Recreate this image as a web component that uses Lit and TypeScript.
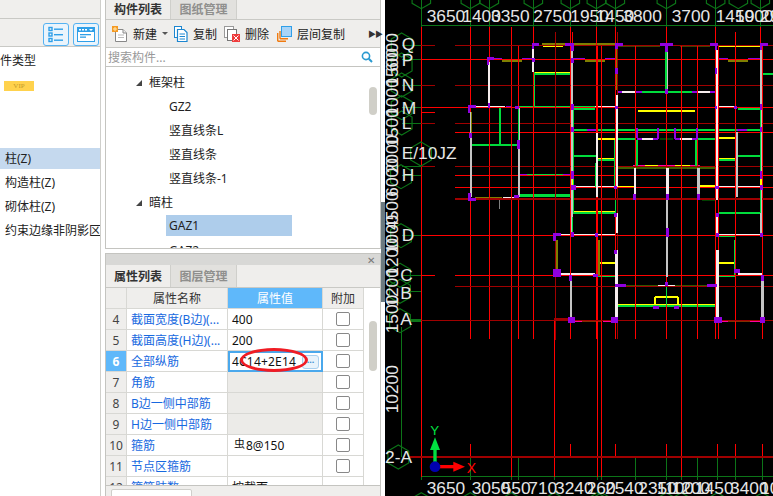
import { LitElement, html, css, svg } from "lit";
import { customElement } from "lit/decorators.js";

type Seg = [number, number, number, number, string, number?];
const W = "#f6ecec", G = "#c4c4c4", N = "#00dc3c", Y = "#ffff00", P = "#9000e0", M = "#ff00a0",
  O = "#7f7f00", D = "#006a00", R = "#ff0000", K = "#a00000", DG = "#0c7418";

const walls: Seg[] = [
  [470, 132, 690, 132, O, 6], [475, 139, 535, 139, Y, 3], [700, 139, 825, 139, "#404000", 3], [885, 139, 975, 139, "#404000", 3], [1000, 139, 1125, 139, Y, 3],
  [312, 185, 312, 318, W, 6], [325, 176, 350, 176, P, 6], [350, 183, 410, 183, O, 5], [410, 176, 445, 176, P, 6],
  [445, 145, 445, 215, W, 6], [447, 215, 447, 320, N, 3], [450, 222, 558, 222, N, 8], [450, 217, 558, 217, Y, 3],
  [260, 319, 360, 319, W, 3], [400, 319, 690, 319, N, 3], [362, 319, 380, 319, P, 5],
  [257, 335, 257, 590, G, 6], [260, 335, 260, 400, O, 3], [344, 325, 344, 432, N, 6], [260, 434, 400, 434, N, 6],
  [401, 325, 401, 590, G, 6], [401, 325, 401, 420, N, 3], [400, 524, 425, 524, P, 6], [425, 524, 535, 524, N, 6], [535, 524, 560, 524, P, 6],
  [403, 586, 555, 586, N, 9], [270, 592, 350, 592, O, 3], [355, 592, 400, 592, W, 3], [342, 600, 342, 628, "#808080", 3],
  [562, 140, 562, 700, G, 6], [565, 330, 565, 640, N, 3], [565, 176, 600, 176, P, 6], [600, 183, 660, 183, O, 5], [660, 176, 695, 176, P, 6],
  [695, 145, 695, 270, O, 4], [695, 285, 695, 560, W, 6], [700, 276, 710, 276, P, 8], [710, 276, 750, 276, W, 8], [750, 276, 770, 276, P, 8], [770, 276, 920, 276, N, 8], [920, 276, 940, 276, P, 8], [940, 276, 975, 276, W, 8], [975, 276, 990, 276, P, 8],
  [844, 150, 844, 270, N, 7], [848, 150, 848, 270, G, 3], [995, 150, 995, 600, W, 6], [1000, 176, 1030, 176, P, 6], [1030, 183, 1090, 183, O, 5], [1090, 176, 1125, 176, P, 6],
  [1128, 140, 1128, 700, G, 6], [1125, 330, 1125, 640, N, 3], [1135, 222, 1164, 222, N, 7],
  [1000, 319, 1050, 319, W, 3], [1060, 326, 1125, 326, N, 5], [565, 326, 630, 326, N, 5], [630, 319, 690, 319, W, 3],
  [760, 332, 930, 332, Y, 6], [565, 390, 1125, 390, N, 7], [605, 390, 635, 390, P, 6], [1055, 390, 1085, 390, P, 6],
  [755, 385, 755, 415, P, 6], [755, 417, 770, 417, P, 6], [770, 417, 805, 417, W, 6], [805, 417, 820, 417, P, 6], [820, 385, 820, 417, P, 6],
  [870, 385, 870, 417, P, 6], [870, 417, 885, 417, P, 6], [885, 417, 920, 417, W, 6], [920, 417, 935, 417, P, 6], [935, 385, 935, 417, P, 6],
  [640, 416, 690, 416, Y, 6], [1000, 414, 1050, 414, Y, 6], [700, 416, 750, 416, N, 5], [940, 416, 990, 416, N, 5], [825, 416, 865, 416, "#004000", 6],
  [636, 400, 636, 590, W, 6], [632, 490, 632, 560, N, 3], [755, 420, 755, 497, N, 6], [934, 420, 934, 497, N, 6], [1056, 395, 1056, 590, G, 4],
  [565, 468, 632, 468, N, 6], [1058, 468, 1125, 468, N, 6], [640, 480, 690, 480, N, 8], [640, 475, 690, 475, Y, 3], [1000, 480, 1050, 480, N, 8], [1000, 475, 1050, 475, Y, 3],
  [689, 420, 689, 560, N, 4], [695, 504, 990, 504, "#406000", 5], [695, 498, 990, 498, O, 3], [780, 495, 820, 495, Y, 3], [870, 495, 915, 495, Y, 3], [820, 498, 870, 498, M, 6], [745, 498, 780, 498, M, 5], [915, 498, 945, 498, M, 5],
  [750, 505, 750, 590, W, 7], [847, 505, 847, 590, W, 7], [940, 505, 940, 590, G, 7],
  [565, 561, 690, 561, W, 4], [695, 561, 750, 561, Y, 4], [940, 558, 990, 558, Y, 4], [1000, 561, 1125, 561, W, 4], [1128, 530, 1128, 560, Y, 4], [562, 530, 562, 560, Y, 4],
  [750, 599, 940, 599, "#999999", 4], [950, 600, 990, 600, "#004000", 4], [1000, 638, 1125, 638, N, 6], [565, 638, 690, 638, N, 6], [565, 633, 690, 633, Y, 3],
  [525, 704, 690, 704, W, 4], [1000, 704, 1125, 704, W, 4], [1000, 710, 1050, 710, N, 4],
  [695, 640, 695, 700, W, 6], [997, 640, 997, 700, W, 6], [692, 600, 692, 640, N, 3], [562, 650, 562, 700, N, 4], [847, 600, 847, 830, G, 6],
  [515, 720, 515, 815, O, 5], [641, 720, 641, 825, O, 5], [1048, 720, 1048, 825, N, 5],
  [520, 822, 630, 822, W, 5], [640, 829, 690, 829, N, 4], [1000, 829, 1050, 829, N, 4], [1060, 822, 1130, 822, W, 5],
  [557, 830, 557, 955, G, 7], [694, 750, 694, 960, W, 7], [997, 750, 997, 960, W, 7], [1132, 830, 1132, 955, G, 7],
  [640, 789, 690, 789, Y, 6], [1000, 789, 1050, 789, Y, 6], [695, 856, 995, 856, "#335500", 5], [820, 856, 870, 856, W, 5], [844, 860, 844, 915, N, 4],
  [810, 890, 810, 915, Y, 6], [810, 891, 880, 891, Y, 6], [878, 890, 878, 915, Y, 6], [695, 918, 990, 918, N, 8], [695, 913, 990, 913, Y, 3],
  [590, 962, 650, 962, "#803000", 6], [655, 962, 680, 962, M, 6], [1030, 962, 1095, 962, "#803000", 6], [1000, 962, 1030, 962, M, 6], [1095, 962, 1125, 962, M, 6], [570, 962, 590, 962, M, 6],
];
const hWalls = walls.filter((s) => s[1] === s[3]);
const vWalls = walls.filter((s) => s[1] !== s[3]);
// purple columns: x, y, w, h
const cols: number[][] = [
  [440, 128, 22, 10], [440, 128, 8, 20], [540, 128, 25, 10], [558, 128, 8, 25], [690, 128, 25, 10], [691, 128, 8, 20], [825, 128, 40, 10], [840, 128, 8, 28], [975, 128, 25, 10], [989, 128, 8, 22], [1125, 128, 25, 10], [1124, 128, 8, 22],
  [305, 172, 22, 8], [305, 172, 8, 22], [248, 315, 24, 8], [248, 315, 8, 24], [308, 310, 8, 14], [390, 318, 12, 8], [253, 400, 8, 14], [397, 420, 8, 26],
  [248, 580, 10, 20], [248, 594, 25, 8], [388, 586, 14, 8], [558, 175, 8, 14], [691, 205, 8, 16], [989, 205, 8, 16], [441, 175, 8, 12],
  [558, 312, 8, 18], [691, 318, 8, 10], [989, 318, 8, 10], [1047, 318, 8, 10], [1124, 312, 8, 18], [840, 268, 8, 14], [558, 380, 8, 16], [1124, 380, 8, 16], [558, 512, 8, 24], [1124, 512, 8, 24], [1124, 555, 10, 16], [558, 555, 14, 16], [686, 558, 10, 10], [990, 558, 12, 10],
  [745, 582, 8, 18], [843, 582, 8, 18], [936, 582, 8, 18], [843, 685, 8, 25], [505, 700, 22, 8], [505, 700, 8, 24], [558, 695, 8, 16], [630, 700, 8, 10], [688, 640, 8, 12], [993, 640, 8, 12], [993, 698, 10, 12], [1124, 698, 10, 14],
  [505, 808, 22, 24], [552, 825, 10, 18], [625, 822, 14, 10], [688, 750, 8, 12], [1046, 808, 18, 10], [1127, 825, 10, 18], [690, 852, 32, 8], [965, 852, 32, 8], [840, 845, 8, 12], [805, 918, 16, 9], [866, 918, 16, 9],
  [548, 950, 22, 20], [678, 950, 22, 20], [988, 950, 24, 20], [1125, 950, 16, 20],
];
const redLong: [number, number, number, string?][] = [
  [109, 80, 1430], [256, 80, 1018], [313, 80, 1018], [379, 80, 1430], [400, 135, 1018], [445, 80, 1018], [511, 95, 1020, K],
  [508, 960, 1430], [556, 80, 1018], [562, 95, 135], [634, 80, 1018], [637, 135, 1430], [650, 135, 1430], [691, 80, 1018], [698, 95, 1018, K],
  [751, 135, 1018], [844, 80, 1018], [889, 135, 1430], [937, 135, 1018], [990, 80, 1018], [1000, 135, 1018], [1051, 95, 1018], [1126, 80, 140], [1132, 135, 1018],
];
const ticks = [256, 379, 556, 637, 691, 844, 997, 1051, 1132];
const botGreen = [109, 256, 379, 400, 508, 637, 650, 751, 844, 889, 937, 997, 1051, 1132];
const topGreen = [109, 256, 313, 445, 556, 634, 691, 844, 992, 1126];
const hexTop = [109, 256, 313, 445, 556, 634, 691, 844, 992, 1060, 1126];
const hexBot = [109, 256, 379, 508, 637, 650, 844, 889, 997, 1132];
const leftH: [number, string, number, string][] = [
  [135, K, 109, "Q"], [179, R, 109, "P"], [255, K, 109, "N"], [323, R, 109, "M"], [369, K, 109, "L"], [500, K, 109, "E/10JZ"], [527, R, 210, "H"], [707, R, 109, "D"],
];
const topLabels: [string, number][] = [["3650", 125], ["1400", 232], ["3350", 318], ["2750", 445], ["1950", 556], ["1450", 632], ["3800", 715], ["3700", 860], ["1450", 992], ["1900", 1050], ["2900", 1125]];
const botLabels: [string, number][] = [["3650", 125], ["3050", 260], ["550", 350], ["710", 430], ["3240", 510], ["260", 605], ["2540", 660], ["2350", 760], ["1100", 815], ["1200", 860], ["1450", 930], ["3400", 1035], ["1000", 1125]];
const sideLabels: [string, number][] = [["6000", 215], ["1500", 260], ["1000", 350], ["1500", 440], ["2000", 520], ["6000", 590], ["4500", 690], ["1000", 760], ["1200", 830], ["1200", 920], ["1500", 1000], ["10200", 1240]];
const hex = (cx: number, cy: number, r = 30) => {
  const pts = [0, 1, 2, 3, 4, 5].map((i) => {
    const a = (Math.PI / 3) * i - Math.PI / 2;
    return `${cx + r * Math.cos(a)},${cy + r * Math.sin(a)}`;
  }).join(" ");
  return svg`<polygon points=${pts} fill="none" stroke=${DG} stroke-width="3.5"></polygon>`;
};
const ln = (a: number, b: number, c: number, d: number, col: string, w = 3) =>
  svg`<line x1=${a} y1=${b} x2=${c} y2=${d} stroke=${col} stroke-width=${w}></line>`;

@customElement("cad-canvas")
class CadCanvas extends LitElement {
  static styles = css`
    :host { display: block; width: 388px; height: 496px; background: #000; }
    svg { display: block; }
    .geo { shape-rendering: crispEdges; }
    text { font-family: "Liberation Sans", sans-serif; font-size: 52px; fill: #e6e6e6; }
    .x { fill: #ff0000; font-size: 42px; }
    .y { fill: #00e040; font-size: 40px; }
  `;
  render() {
    return html`<svg width="388" height="496" viewBox="0 0 1164 1488">
      <g class="geo">
        ${ln(109, 75, 1164, 75, DG)} ${ln(48, 980, 48, 1371, DG)}
        ${topGreen.map((x) => ln(x, 0, x, 130, DG))}
        ${botGreen.map((x) => ln(x, 1371, x, 1440, DG))}
        ${ln(109, 1430, 1164, 1430, DG)}
        ${leftH.map(([y]) => ln(50, y, 109, y, DG))}
        ${ln(50, 826, 109, 826, DG)} ${ln(50, 874, 109, 874, DG)} ${ln(75, 962, 109, 962, DG, 8)}
        ${hWalls.map(([a, b, c, d, col, w]) => ln(a, b, c, d, col, w ?? 4))}
        ${redLong.map(([x, a, b, c]) => ln(x, a, x, b, c ?? R))}
        ${ticks.map((x) => ln(x, 1332, x, 1371, R))}
        ${leftH.map(([y, c, s]) => svg`${s === 109 ? ln(109, y, c === K ? 150 : 1164, y, c) : ""}${ln(210, y, 1164, y, c)}`)}
        ${ln(210, 397, 1164, 397, R)} ${ln(210, 563, 1164, 563, R)} ${ln(210, 597, 1164, 597, K, 4)}
        ${ln(109, 337, 150, 337, R)} ${ln(109, 826, 150, 826, R)} ${ln(210, 826, 1164, 826, R)} ${ln(210, 859, 1164, 859, K)}
        ${ln(109, 962, 1164, 962, K, 4)} ${ln(508, 957, 550, 957, K, 4)} ${ln(75, 1371, 1164, 1371, K, 5)}
        ${vWalls.map(([a, b, c, d, col, w]) => ln(a, b, c, d, col, w ?? 4))}
        ${cols.map(([x, y, w, h]) => svg`<rect x=${x} y=${y} width=${w} height=${h} fill=${P}></rect>`)}
      </g>
      ${hexTop.map((x) => hex(x, -6, 32))}
      ${hexBot.map((x) => hex(x, 1512, 34))}
      ${[[50, 135], [50, 195], [50, 255], [50, 323], [50, 369], [108, 462], [48, 530], [48, 707], [45, 826], [45, 874], [45, 962], [40, 1371]].map(([x, y]) => hex(x, y, 36))}
      ${sideLabels.map(([t, y]) => svg`<text transform="translate(38 ${y}) rotate(-90)">${t}</text>`)}
      ${leftH.map(([, , , s], i) => svg`<text x="50" y=${[150, 197, 272, 341, 387, 477, 542, 723][i]}>${s}</text>`)}
      <text x="46" y="842">C</text><text x="46" y="896">B</text><text x="46" y="976">A</text><text x="0" y="1390">2-A</text>
      ${topLabels.map(([t, x]) => svg`<text x=${x} y="65">${t}</text>`)}
      ${botLabels.map(([t, x]) => svg`<text x=${x} y="1481">${t}</text>`)}
      <rect x="145" y="1340" width="10" height="60" fill="#00e040"></rect>
      <polygon points="150,1312 135,1350 165,1350" fill="#00e040"></polygon>
      <rect x="150" y="1395" width="60" height="10" fill="#ff0000"></rect>
      <polygon points="240,1400 205,1385 205,1415" fill="#ff0000"></polygon>
      <circle cx="150" cy="1400" r="16" fill="#0000b0"></circle>
      <text class="y" x="136" y="1305">Y</text><text class="x" x="245" y="1418">X</text>
    </svg>`;
  }
}

const iconList = html`<svg width="24" height="21" viewBox="0 0 24 21"><g fill="none" stroke="#2f9fe8" stroke-width="1.4"><rect x="5" y="3.5" width="3" height="3"/><rect x="5" y="9" width="3" height="3"/><rect x="5" y="14.5" width="3" height="3"/></g><g fill="#2f9fe8"><rect x="10" y="4.5" width="9" height="1.4"/><rect x="10" y="10" width="9" height="1.4"/><rect x="10" y="15.5" width="9" height="1.4"/></g></svg>`;
const iconForm = html`<svg width="24" height="21" viewBox="0 0 24 21"><rect x="3" y="3" width="18" height="15" fill="#2f9fe8"/><rect x="4" y="8" width="16" height="9" fill="#fff"/><g fill="#fff"><rect x="5" y="5" width="2" height="1.5"/><rect x="8" y="5" width="2" height="1.5"/><rect x="11" y="5" width="2" height="1.5"/><polygon points="15,5 19,5 17,7"/></g><g fill="#2f9fe8"><rect x="6" y="10" width="11" height="1.3"/><rect x="6" y="12.5" width="6" height="1.3"/></g></svg>`;
const iconNew = html`<svg width="16" height="16" viewBox="0 0 16 16"><path d="M3.5 3.5H11L14.5 7V15.5H3.5Z" fill="#fff" stroke="#888"/><path d="M11 3.5V7H14.5" fill="#eee" stroke="#888"/><path d="M6 9h6M6 11.5h6" stroke="#bbb"/><rect x="0" y="0" width="6" height="6" fill="#f59a23"/><path d="M1 3h4M3 1v4" stroke="#ffe9b0"/></svg>`;
const iconCopy = html`<svg width="14" height="16" viewBox="0 0 14 16"><rect x="0.5" y="0.5" width="7" height="11" fill="#fff" stroke="#1c86d0"/><path d="M3.5 3.5H10L13 6.5V15.5H3.5Z" fill="#fff" stroke="#1c86d0" stroke-width="1.2"/><path d="M5.5 8h5.5M5.5 10.5h5.5M5.5 13h5.5" stroke="#1c86d0"/></svg>`;
const iconDel = html`<svg width="16" height="16" viewBox="0 0 16 16"><rect x="0.5" y="0.5" width="9" height="11" fill="#fff" stroke="#999"/><rect x="3.5" y="3.5" width="9" height="11" fill="#fff" stroke="#777"/><rect x="8" y="8" width="8" height="8" fill="#ee3b3b"/><path d="M9.5 9.5l5 5M14.5 9.5l-5 5" stroke="#fff"/></svg>`;
const iconFloor = html`<svg width="15" height="16" viewBox="0 0 15 16"><path d="M0.7 15.3V7M0.7 15.3H9" stroke="#f07a10" fill="none" stroke-width="1.4"/><path d="M3 12.8V5M3 12.8H11" stroke="#f07a10" fill="none" stroke-width="1.4"/><rect x="4.5" y="0.5" width="10" height="10" fill="#a9d4f7" stroke="#2f9fe8"/></svg>`;
const iconSearch = html`<svg width="12" height="12" viewBox="0 0 12 12"><circle cx="5" cy="5" r="3.6" fill="none" stroke="#2a9ad0" stroke-width="1.6"/><path d="M7.8 7.8L11 11" stroke="#2a9ad0" stroke-width="2"/></svg>`;

const rows: { n: string; name: string; val?: unknown; cls?: string; noCheck?: boolean }[] = [
  { n: "4", name: "截面宽度(B边)(...", val: "400" },
  { n: "5", name: "截面高度(H边)(...", val: "200" },
  { n: "6", name: "全部纵筋", cls: "sel" },
  { n: "7", name: "角筋", cls: "dis" },
  { n: "8", name: "B边一侧中部筋", cls: "dis" },
  { n: "9", name: "H边一侧中部筋", cls: "dis" },
  { n: "10", name: "箍筋", val: html`<span class="rebar">虫</span>8@150` },
  { n: "11", name: "节点区箍筋" },
  { n: "12", name: "箍筋肢数", val: "按截面", noCheck: true },
];

@customElement("app-root")
export class AppRoot extends LitElement {
  static styles = css`
    :host { display: flex; width: 773px; height: 496px; overflow: hidden; background: #fff;
      font-family: "Noto Sans", "Noto Sans CJK SC", sans-serif; font-size: 12px; color: #222; }
    .left { width: 100px; border-right: 1px solid #cfcfcb; flex: none; display: flex; flex-direction: column; }
    .ltop { height: 18px; background: #f0efed; border-bottom: 1px solid #c9c9c5; }
    .ltools { height: 27px; background: #f0efed; border-bottom: 1px solid #c9c9c5; display: flex; justify-content: flex-end; align-items: center; gap: 4px; padding-right: 1px; }
    .lbtn { width: 24px; height: 21px; border: 1px solid #55b2f2; border-radius: 3px; background: #eaf4fc; box-sizing: content-box; margin-top: 3px; display: flex; }
    .ltype { height: 28px; line-height: 28px; }
    .vip { width: 30px; height: 10px; margin: 6px 0 0 4px; background: #ffd24d; color: #c49a2a; font: 7px/10px "Liberation Serif", serif; text-align: center; }
    .lrows { margin-top: 57px; }
    .lrow { height: 24px; line-height: 21px; padding-left: 5px; white-space: nowrap; overflow: hidden; }
    .lrow.on { background: #c5d9ee; height: 21px; margin-bottom: 3px; }
    .mid { width: 276px; margin-left: 4px; flex: none; display: flex; flex-direction: column; }
    .gutter { width: 4px; flex: none; display: flex; flex-direction: column; }
    .thumb { height: 100px; margin-top: 202px; background: #6c7a80; }
    .top { height: 249px; display: flex; flex-direction: column; border-left: 1px solid #c4c4c0; border-right: 1px solid #c4c4c0; border-bottom: 1px solid #c4c4c0; box-sizing: border-box; }
    .tabs { display: flex; background: #efeeec; height: 19px; border-bottom: 1px solid #c9c9c5; flex: none; }
    .tab { width: 64px; text-align: center; font-weight: 700; line-height: 20px; color: #333; }
    .tab.off { width: 65px; background: #e2e1de; color: #8f8f8d; border-left: 1px solid #cfcfcb; border-right: 1px solid #cfcfcb; }
    .tools { height: 27px; background: #efeeec; border-bottom: 1px solid #c9c9c5; display: flex; align-items: center; flex: none; padding-left: 6px; }
    .tool { display: flex; align-items: center; gap: 5px; }
    .tool.t2 { margin-left: 6px; } .tool.t3 { margin-left: 7px; } .tool.t4 { margin-left: 8px; }
    .caret { width: 0; height: 0; border: 3px solid transparent; border-top: 3px solid #555; border-bottom: 0; }
    .more { margin-left: auto; margin-right: 3px; color: #333; font-size: 8px; letter-spacing: -1px; width: 9px; }
    .search { height: 18px; background: #fff; border-bottom: 1px solid #c4c4c0; display: flex; align-items: center; justify-content: space-between; padding: 0 7px 0 2px; color: #999; flex: none; }
    .tree { flex: 1; overflow: hidden; position: relative; padding-top: 4px; }
    .node { height: 24px; line-height: 24px; white-space: nowrap; display: flex; align-items: center; }
    .node.g { padding-left: 30px; gap: 7px; }
    .tri { width: 0; height: 0; border-left: 6px solid transparent; border-bottom: 6px solid #444; }
    .node.l { padding-left: 63px; }
    .node.act { margin-left: 60px; width: 123px; padding-left: 3px; background: #aecdeb; height: 21px; margin-bottom: 3px; }
    .scroll { position: absolute; right: 3px; width: 8px; background: #d0cfc8; border-radius: 4px; }
    .tree .scroll { top: 20px; height: 28px; }
    .gap { height: 4px; flex: none; }
    .bottom { flex: 1; min-height: 0; display: flex; flex-direction: column; border: 1px solid #c4c4c0; border-bottom: 0; position: relative; }
    .bar { height: 11px; background: #d8d8d6; display: flex; justify-content: flex-end; align-items: center; padding-right: 5px; color: #777; font-size: 10px; line-height: 10px; flex: none; }
    .bottom .tabs { height: 22px; }
    .bottom .tab { line-height: 24px; }
    .table { flex: 1; min-height: 0; overflow: hidden; position: relative; }
    .row { display: grid; grid-template-columns: 21px 101px 95px 41px; width: 258px; height: 21px; }
    .row > div { border-right: 1px solid #d8d8d4; border-bottom: 1px solid #d8d8d4; box-sizing: border-box; line-height: 21px; white-space: nowrap; overflow: hidden; }
    .row.head > div { background: #efeeec; text-align: center; color: #333; }
    .row.head > div.hv { background: #5fb8fa; color: #fff; }
    .num { background: #efeeec; text-align: center; color: #444; }
    .name { color: #1769e0; padding-left: 4px; }
    .val { padding-left: 4px; color: #111; }
    .row > .add { display: flex; align-items: center; justify-content: center; }
    .cb { width: 14px; height: 14px; border: 1px solid #888; border-radius: 2px; box-sizing: border-box; }
    .sel .num { background: #5fb8fa; color: #fff; font-weight: 700; }
    .row > .val.on { border: 2px solid #4aa8ec; padding: 0 2px; display: flex; align-items: center; justify-content: space-between; line-height: 16px; letter-spacing: 0.2px; }
    .dots { width: 15px; height: 12px; border-radius: 3px; border: 1px solid #a9d0ee; background: #e8f3fb; color: #3f8fd0; font-size: 9px; line-height: 7px; text-align: center; font-weight: 700; letter-spacing: 0; }
    .dis .val { background: #ecebe8; }
    .rebar { font-size: 11px; position: relative; top: -2px; margin: 0 1px 0 2px; }
    .table .scroll { top: 33px; height: 50px; }
    .ring { position: absolute; left: 134px; top: 60px; width: 68px; height: 24px; box-sizing: border-box; border: 3.5px solid #f01c24; border-radius: 50%; }
    .foot { height: 10px; background: #efeeec; border-top: 1px solid #c4c4c0; flex: none; overflow: hidden; }
    .ftab { width: 79px; height: 10px; margin: 3px 0 0 5px; background: #fff; border: 1px solid #cfcfcb; border-radius: 2px 2px 0 0; }
  `;
  render() {
    return html`
      <div class="left">
        <div class="ltop"></div>
        <div class="ltools"><div class="lbtn">${iconList}</div><div class="lbtn">${iconForm}</div></div>
        <div class="ltype">件类型</div>
        <div class="vip">VIP</div>
        <div class="lrows">
          <div class="lrow on">柱(Z)</div>
          <div class="lrow">构造柱(Z)</div>
          <div class="lrow">砌体柱(Z)</div>
          <div class="lrow">约束边缘非阴影区</div>
        </div>
      </div>
      <div class="mid">
        <div class="top">
          <div class="tabs"><div class="tab">构件列表</div><div class="tab off">图纸管理</div></div>
          <div class="tools">
            <div class="tool">${iconNew}<span>新建</span><span class="caret"></span></div>
            <div class="tool t2">${iconCopy}<span>复制</span></div>
            <div class="tool t3">${iconDel}<span>删除</span></div>
            <div class="tool t4">${iconFloor}<span>层间复制</span></div>
            <span class="more">▶▶</span>
          </div>
          <div class="search"><span>搜索构件...</span>${iconSearch}</div>
          <div class="tree">
            <div class="node g"><span class="tri"></span>框架柱</div>
            <div class="node l">GZ2</div>
            <div class="node l">竖直线条L</div>
            <div class="node l">竖直线条</div>
            <div class="node l">竖直线条-1</div>
            <div class="node g"><span class="tri"></span>暗柱</div>
            <div class="node act">GAZ1</div>
            <div class="node l">GAZ2</div>
            <div class="scroll"></div>
          </div>
        </div>
        <div class="gap"></div>
        <div class="bottom">
          <div class="bar">✕</div>
          <div class="tabs"><div class="tab">属性列表</div><div class="tab off">图层管理</div></div>
          <div class="table">
            <div class="row head"><div></div><div>属性名称</div><div class="hv">属性值</div><div>附加</div></div>
            ${rows.map((r) => html`<div class="row ${r.cls ?? ""}">
              <div class="num">${r.n}</div>
              <div class="name">${r.name}</div>
              ${r.cls === "sel"
                ? html`<div class="val on"><span>4C14+2E14</span><span class="dots">...</span></div>`
                : html`<div class="val">${r.val ?? ""}</div>`}
              <div class="add">${r.noCheck ? "" : html`<span class="cb"></span>`}</div>
            </div>`)}
            <div class="scroll"></div>
            <div class="ring"></div>
          </div>
          <div class="foot"><div class="ftab"></div></div>
        </div>
      </div>
      <div class="gutter"><div class="thumb"></div></div>
      <cad-canvas></cad-canvas>
    `;
  }
}
